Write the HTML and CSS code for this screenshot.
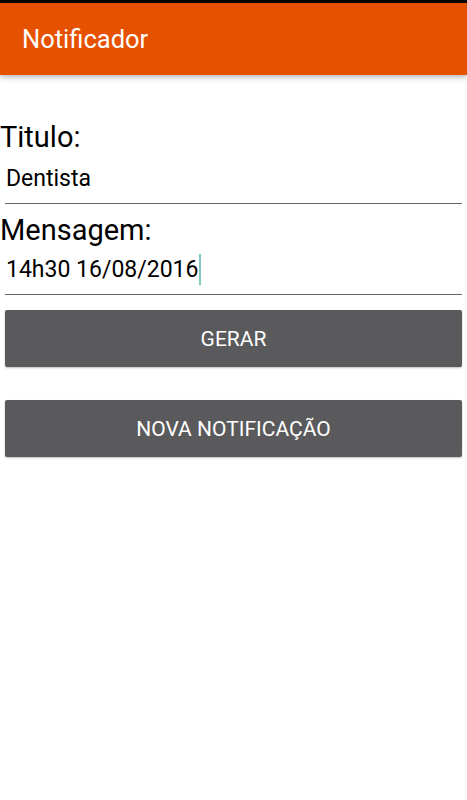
FILE: index.html
```html
<!DOCTYPE html>
<html lang="pt">
<head>
    <meta charset="UTF-8">
    <meta name="viewport" content="width=device-width, initial-scale=1.0">
    <title>Notificador</title>
    <link rel="stylesheet" href="styles.css">
</head>
<body>
    <div class="app-bar">
        <span class="app-title">Notificador</span>
    </div>

    <div class="form">
        <div class="field-label">Titulo:</div>
        <div class="field-input">Dentista</div>

        <div class="field-label second">Mensagem:</div>
        <div class="field-input focused">14h30 16/08/2016<span class="caret"></span></div>

        <button class="action-button first">GERAR</button>
        <button class="action-button">NOVA NOTIFICAÇÃO</button>
    </div>
</body>
</html>
```

FILE: styles.css
```css
:root {
    --primary-color: #e65100;
    --button-color: #5a5a5c;
}

body {
    margin: 0;
    padding: 0;
    font-family: 'Roboto', 'Noto Sans', sans-serif;
    background: #ffffff;
    min-height: 100vh;
}

.app-bar {
    height: 72px;
    border-top: 3px solid #000000;
    background: var(--primary-color);
    display: flex;
    align-items: center;
    padding-left: 22px;
    box-shadow: 0 2px 6px rgba(0, 0, 0, 0.3);
    position: relative;
}

.app-title {
    color: #ffffff;
    font-size: 25.5px;
}

.form {
    padding-top: 46px;
    display: flex;
    flex-direction: column;
}

.field-label {
    font-size: 29px;
    line-height: 32px;
    color: #000000;
}

.field-label.second {
    margin-top: 10px;
}

.field-input {
    margin: 0 5px;
    padding: 12px 1px 10px;
    font-size: 23px;
    line-height: 28px;
    color: #000000;
    border-bottom: 1px solid #666666;
}

.field-input.focused {
    padding-top: 10px;
}

.caret {
    display: inline-block;
    width: 2px;
    height: 31px;
    margin: -2px 0 -1px 1px;
    vertical-align: top;
    background: #80cbc4;
}

.action-button {
    margin: 33px 5px 0;
    height: 57px;
    border: none;
    border-radius: 2px;
    background: var(--button-color);
    color: #ffffff;
    font-family: 'Roboto', 'Noto Sans', sans-serif;
    font-size: 21px;
    box-shadow: 0 1px 2px rgba(0, 0, 0, 0.25);
}

.action-button.first {
    margin-top: 15px;
}
```
